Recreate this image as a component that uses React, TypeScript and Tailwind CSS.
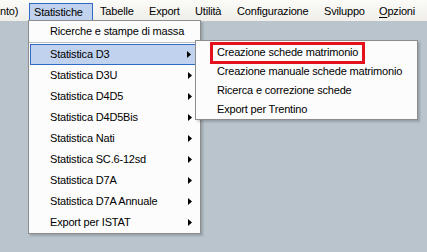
import React from "react";

const font = { fontFamily: '"Liberation Sans", Arial, sans-serif' };

function Arrow() {
  return (
    <svg width="4" height="7" viewBox="0 0 4 7" className="shrink-0">
      <path d="M0 0 L4 3.5 L0 7 Z" fill="#000" />
    </svg>
  );
}

const mainItems = [
  "Statistica D3U",
  "Statistica D4D5",
  "Statistica D4D5Bis",
  "Statistica Nati",
  "Statistica SC.6-12sd",
  "Statistica D7A",
  "Statistica D7A Annuale",
  "Export per ISTAT",
];

const subItems = [
  "Creazione schede matrimonio",
  "Creazione manuale schede matrimonio",
  "Ricerca e correzione schede",
  "Export per Trentino",
];

export default function App() {
  return (
    <div
      className="relative w-[427px] h-[252px] overflow-hidden bg-[#b9c4cc] text-[11px] tracking-[-0.18px] text-black leading-none"
      style={font}
    >
      {/* menu bar */}
      <div className="flex h-[21px] items-stretch bg-gradient-to-b from-[#fbfbf8] to-[#efeee9]">
        <div className="w-[29px] flex items-center pl-0 pt-[1px]">nto)</div>
        <div className="w-[64px] mt-[3px] h-[18px] flex items-center pl-[4px] bg-[#c1d2ee] border border-[#316ac5] border-b-0">
          Statistiche
        </div>
        <div className="w-[50px] flex items-center pl-[7px] pt-[1px]">Tabelle</div>
        <div className="w-[46px] flex items-center pl-[6px] pt-[1px]">Export</div>
        <div className="w-[42px] flex items-center pl-[6px] pt-[1px]">Utilità</div>
        <div className="w-[87px] flex items-center pl-[6px] pt-[1px]">Configurazione</div>
        <div className="w-[55px] flex items-center pl-[6px] pt-[1px]">Sviluppo</div>
        <div className="flex items-center pl-[6px] pt-[1px]">
          <span>
            <span className="underline underline-offset-2">O</span>pzioni
          </span>
        </div>
      </div>

      {/* main dropdown */}
      <div className="absolute left-[28px] top-[20px] w-[173px] h-[214px] bg-[#fcfcfc] border border-[#8d8d8d] shadow-[2px_2px_2px_rgba(0,0,0,0.18)] flex flex-col">
        <div className="h-[21px] flex items-center pl-[21px]">Ricerche e stampe di massa</div>
        <div className="h-[2px] border-t border-[#bdbdbd]" />
        <div className="h-[21px] mx-[1px] flex items-center justify-between pl-[19px] pr-[7px] bg-[#c1d2ee] border border-[#316ac5]">
          <span>Statistica D3</span>
          <Arrow />
        </div>
        {mainItems.map((t) => (
          <div key={t} className="h-[21px] flex items-center justify-between pl-[21px] pr-[8px]">
            <span>{t}</span>
            <Arrow />
          </div>
        ))}
      </div>

      {/* submenu */}
      <div className="absolute left-[195px] top-[40px] w-[223px] h-[80px] bg-[#fcfcfc] border border-[#8d8d8d] shadow-[2px_2px_2px_rgba(0,0,0,0.18)] flex flex-col pt-[2px]">
        {subItems.map((t) => (
          <div key={t} className="h-[19px] flex items-center pl-[21px]">
            {t}
          </div>
        ))}
      </div>

      {/* red annotation box */}
      <div className="absolute left-[210px] top-[42px] w-[155px] h-[22px] border-[3px] border-[#e3101e]" />
    </div>
  );
}
